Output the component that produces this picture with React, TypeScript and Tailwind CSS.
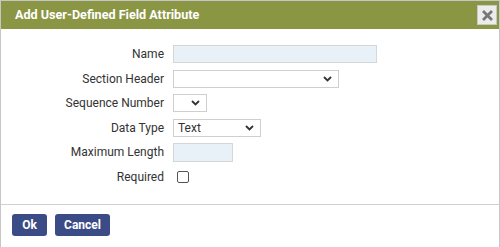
import React from "react";

function Chevron() {
  return (
    <svg width="9" height="6" viewBox="0 0 9 6" className="block">
      <path d="M1 1 L4.5 4.5 L8 1" fill="none" stroke="#333" strokeWidth="1.8" />
    </svg>
  );
}

function Select({ width, value }: { width: string; value?: string }) {
  return (
    <div
      className={`${width} h-[18px] border border-[#cfcfcf] bg-white flex items-center justify-between pl-[4px] pr-[6px] text-[12px] text-[#333]`}
    >
      <span>{value ?? ""}</span>
      <Chevron />
    </div>
  );
}

function Row({ label, children }: { label: string; children: React.ReactNode }) {
  return (
    <div className="flex items-center h-[18px]">
      <div className="w-[164px] text-right pr-[1px] text-[12px] text-[#333] leading-none">{label}</div>
      <div className="pl-[8px] flex items-center">{children}</div>
    </div>
  );
}

export default function App() {
  return (
    <div
      className="w-[500px] h-[247px] bg-white border-t border-l border-r border-[#c6c6c6] overflow-hidden"
      style={{ fontFamily: "Roboto, 'Liberation Sans', sans-serif" }}
    >
      <div className="h-[28px] bg-[#8b9645] flex items-center justify-between pl-[14px] pr-[2px]">
        <span className="text-white font-bold text-[12.6px]">Add User-Defined Field Attribute</span>
        <div className="w-[20px] h-[20px] bg-[#ececec] border border-[#c8c8c8] flex items-center justify-center">
          <svg width="11" height="11" viewBox="0 0 11 11">
            <path d="M2 2 L9 9 M9 2 L2 9" stroke="#777" strokeWidth="2.8" strokeLinecap="square" />
          </svg>
        </div>
      </div>
      <div className="h-[175px] pt-[16px] flex flex-col gap-[6.5px]">
        <Row label="Name">
          <div className="w-[204px] h-[18px] bg-[#e8f0f8] border border-[#d6d6d6]" />
        </Row>
        <Row label="Section Header">
          <Select width="w-[166px]" />
        </Row>
        <Row label="Sequence Number">
          <Select width="w-[34px]" />
        </Row>
        <Row label="Data Type">
          <Select width="w-[88px]" value="Text" />
        </Row>
        <Row label="Maximum Length">
          <div className="w-[60px] h-[19px] bg-[#e8f0f8] border border-[#d6d6d6]" />
        </Row>
        <Row label="Required">
          <div className="ml-[4px] w-[12px] h-[12px] border border-[#555] rounded-[2px] bg-white" />
        </Row>
      </div>
      <div className="border-t border-[#d0d0d0] pt-[9px] pl-[11px] flex gap-[8px]">
        <button className="w-[35px] h-[22px] rounded-[3px] bg-[#3b4b86] text-white font-bold text-[12px] flex items-center justify-center">
          Ok
        </button>
        <button className="w-[55px] h-[22px] rounded-[3px] bg-[#3b4b86] text-white font-bold text-[12px] flex items-center justify-center">
          Cancel
        </button>
      </div>
    </div>
  );
}
